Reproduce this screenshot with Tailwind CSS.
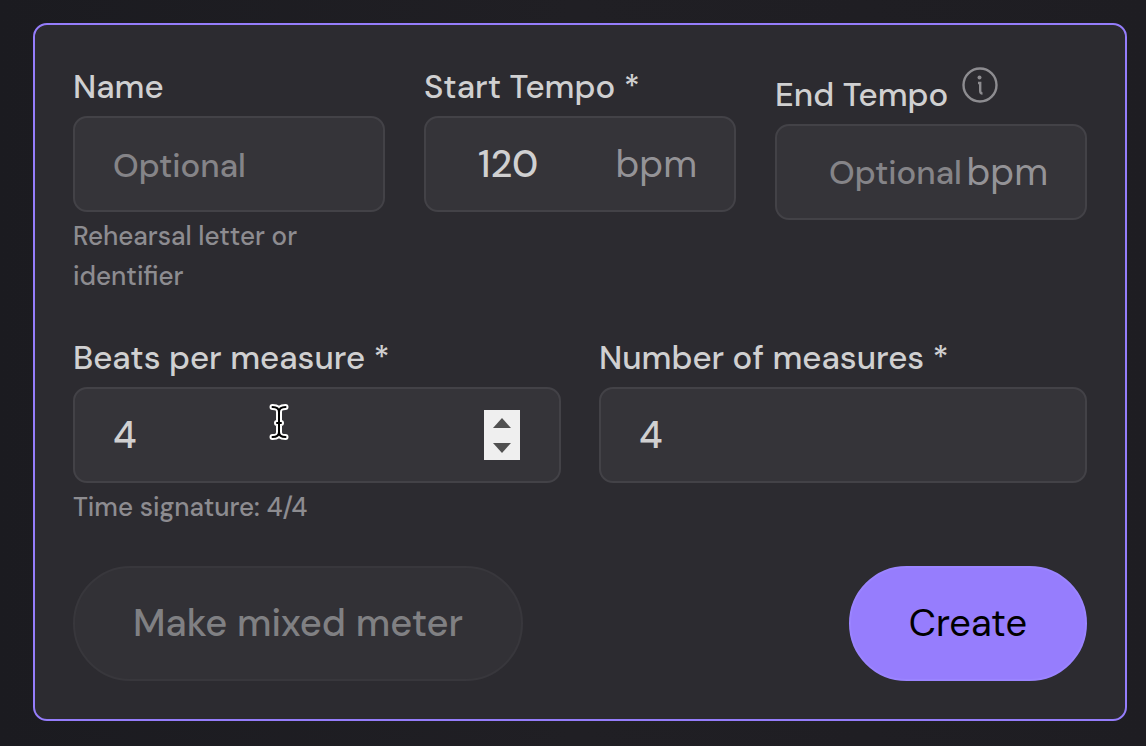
<!DOCTYPE html>
<html lang="en">
  <head>
    <meta charset="UTF-8" />
    <meta name="viewport" content="width=device-width, initial-scale=1.0" />
    <title>Create section</title>
    <script src="https://cdn.jsdelivr.net/npm/@tailwindcss/browser@4"></script>
  </head>
  <body class="min-h-screen bg-[#1e1d22] bg-linear-to-r from-[#1b1b20] via-[#201f24] to-[#1e1d22] pt-[23px] pr-[19px] pb-6 pl-[33px] font-['DM_Sans',Inter,sans-serif] font-medium text-[#d0d0d1]">
    <form class="flex flex-col gap-[39px] rounded-[14px] border-2 border-[#957dfb] bg-[#2c2b30] px-[38px] pt-[39px] pb-[38px]" onsubmit="return false">
      <!-- Name and tempo -->
      <div class="grid grid-cols-3 gap-[39px]">
        <div>
          <label for="name" class="block pb-1.5 text-[33px] leading-[46px]">Name</label>
          <input id="name" type="text" placeholder="Optional" class="h-24 w-full rounded-[14px] border-2 border-[#434247] bg-[#353439] px-[38px] pt-0.5 text-[33px] outline-none placeholder:text-[#858488]" />
          <p class="mt-1 text-[26px] leading-10 text-[#8d8c90]">Rehearsal letter or identifier</p>
        </div>

        <div>
          <label for="start" class="block pb-1.5 text-[33px] leading-[46px]">Start Tempo *</label>
          <div class="flex h-24 items-center rounded-[14px] border-2 border-[#434247] bg-[#353439] pr-[37px] pl-[52px]">
            <input id="start" type="number" value="120" class="w-0 flex-1 text-[38px] outline-none [appearance:textfield] [&::-webkit-inner-spin-button]:appearance-none" />
            <span class="text-[38px] font-normal text-[#949397]">bpm</span>
          </div>
        </div>

        <div>
          <div class="flex items-start gap-3.5 text-[33px]">
            <label for="end" class="pt-2 pb-1.5 leading-[46px]">End Tempo</label>
            <button type="button" aria-label="About end tempo" class="pt-[3px]">
              <svg class="size-9" viewBox="0 0 36 36" fill="none" stroke="#8d8c90" stroke-width="2.400">
                <circle cx="18" cy="18" r="16.5" />
                <circle cx="17.500" cy="10.500" r="2" fill="#8d8c90" stroke="none" />
                <path d="M16 16h2.200v8q0 2.500 2.300 2.500" />
              </svg>
            </button>
          </div>
          <div class="flex h-24 items-center rounded-[14px] border-2 border-[#434247] bg-[#353439] pr-[37px] pl-[52px]">
            <input id="end" type="number" placeholder="Optional" class="w-0 flex-1 pt-0.5 text-[33px] outline-none [appearance:textfield] placeholder:text-[#858488] [&::-webkit-inner-spin-button]:appearance-none" />
            <span class="text-[38px] font-normal text-[#949397]">bpm</span>
          </div>
        </div>
      </div>

      <!-- Meter -->
      <div class="grid grid-cols-2 gap-[38px]">
        <div>
          <label for="beats" class="block pb-1.5 text-[33px] leading-[46px]">Beats per measure *</label>
          <div class="relative flex h-24 items-center rounded-[14px] border-2 border-[#434247] bg-[#353439] pr-[39px] pl-[38px]">
            <input id="beats" type="number" value="4" class="w-0 flex-1 text-[38px] outline-none [appearance:textfield] [&::-webkit-inner-spin-button]:appearance-none" />
            <div class="flex h-[50px] w-9 flex-col bg-[#efefef]">
              <button type="button" aria-label="More beats" class="flex flex-1 items-end justify-center pb-[7px]" onclick="document.getElementById('beats').stepUp()">
                <svg class="h-[10px] w-[18px]" viewBox="0 0 18 10"><path d="M0 10 9 0l9 10z" fill="#505050" /></svg>
              </button>
              <button type="button" aria-label="Fewer beats" class="flex flex-1 items-start justify-center pt-2" onclick="document.getElementById('beats').stepDown()">
                <svg class="h-[10px] w-[18px]" viewBox="0 0 18 10"><path d="M0 0h18L9 10z" fill="#505050" /></svg>
              </button>
            </div>
            <!-- Text cursor -->
            <svg class="pointer-events-none absolute top-3.5 left-[194px] h-[38px] w-5" viewBox="0 0 20 38" fill="none" stroke-linecap="round" stroke-linejoin="round">
              <path d="M3.500 4C8 4 10 5.500 10 9v20c0 3.500-2 5-6.500 5M16.500 4C12 4 10 5.500 10 9v20c0 3.500 2 5 6.500 5M8 20h4" stroke="#fff" stroke-width="6" />
              <path d="M3.500 4C8 4 10 5.500 10 9v20c0 3.500-2 5-6.500 5M16.500 4C12 4 10 5.500 10 9v20c0 3.500 2 5 6.500 5M8 20h4" stroke="#000" stroke-width="2" />
            </svg>
          </div>
          <p class="mt-1 text-[26px] leading-10 text-[#8d8c90]">Time signature: 4/4</p>
        </div>

        <div>
          <label for="measures" class="block pb-1.5 text-[33px] leading-[46px]">Number of measures *</label>
          <input id="measures" type="number" value="4" class="h-24 w-full rounded-[14px] border-2 border-[#434247] bg-[#353439] px-[38px] text-[38px] outline-none [appearance:textfield] [&::-webkit-inner-spin-button]:appearance-none" />
        </div>
      </div>

      <!-- Actions -->
      <div class="flex items-center justify-between">
        <button type="button" class="h-[115px] rounded-full border-2 border-[#38373c] bg-[#323136] px-[58px] text-[38px] text-[#808083]">Make mixed meter</button>
        <button type="submit" class="h-[115px] rounded-full border-2 border-[#9b84ff] bg-[#967dfd] px-[58px] text-[38px] font-normal text-black">Create</button>
      </div>
    </form>
  </body>
</html>
